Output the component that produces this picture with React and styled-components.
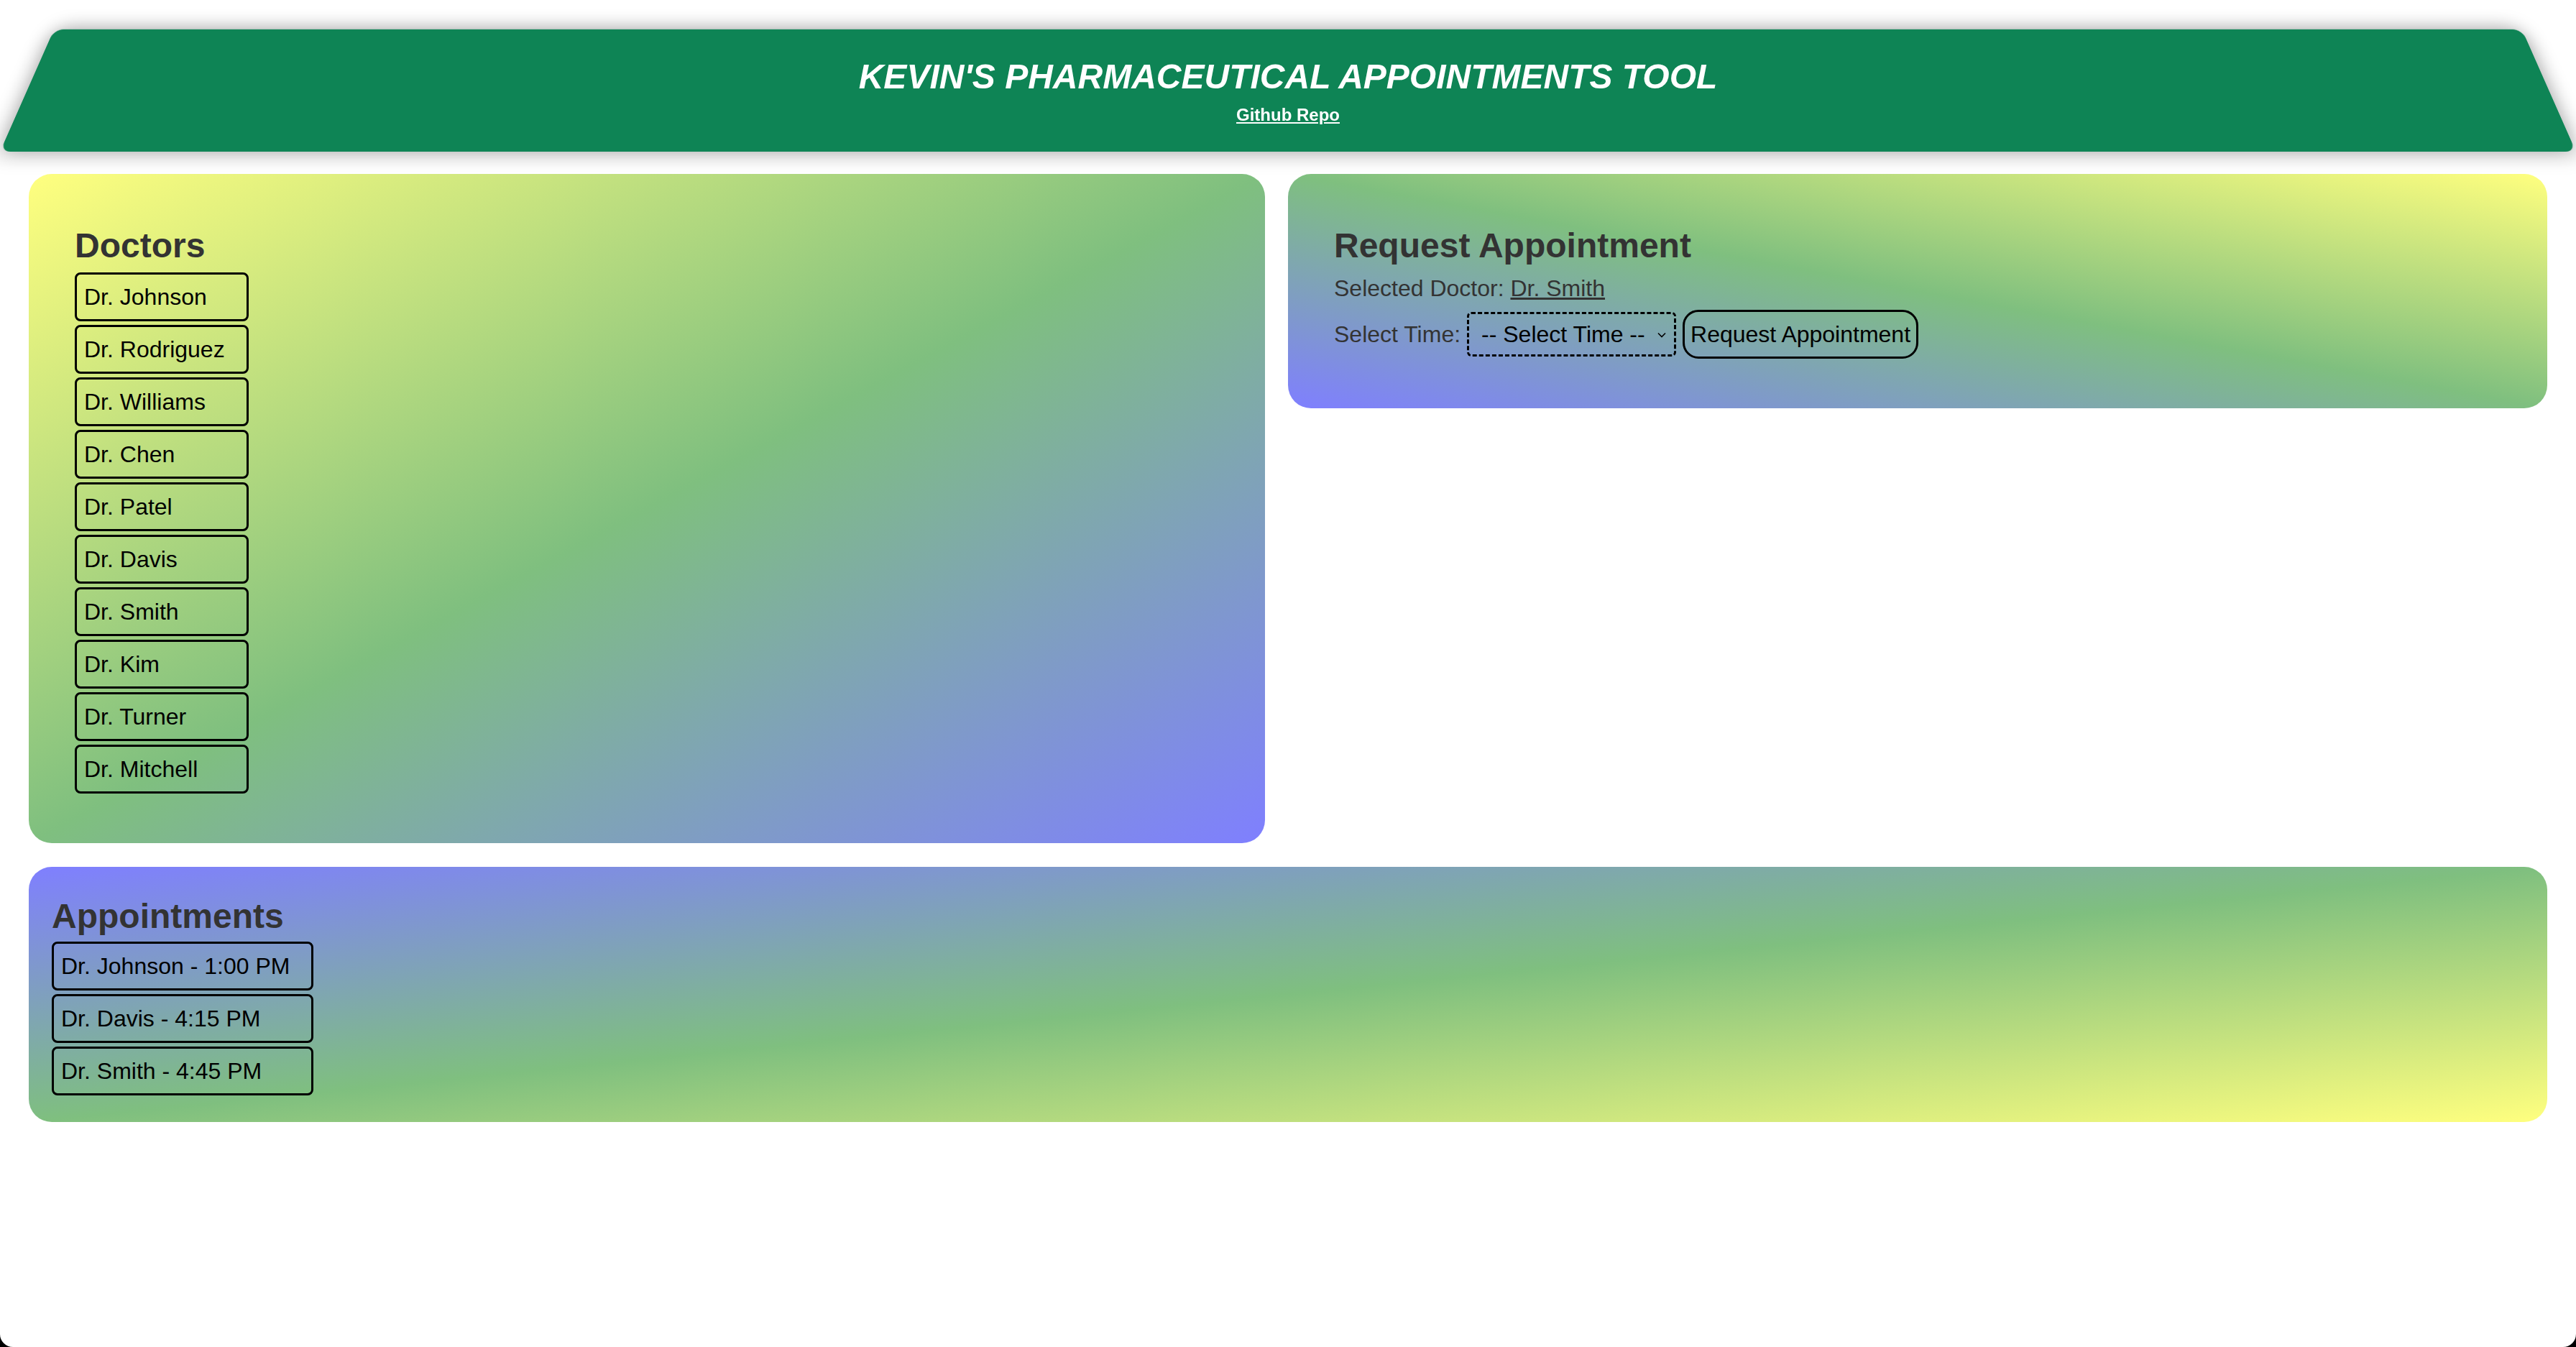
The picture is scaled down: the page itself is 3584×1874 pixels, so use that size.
import React from "react";
import styled, { createGlobalStyle } from "styled-components";

const GlobalStyle = createGlobalStyle`
  html {
    background: #000;
  }

  body {
    margin: 0;
    min-height: 100vh;
    background: #fff;
    border-radius: 0 0 18px 18px;
    font-family: "Liberation Sans", Arial, sans-serif;
    color: #333;
  }
`;

const doctors = [
  "Dr. Johnson",
  "Dr. Rodriguez",
  "Dr. Williams",
  "Dr. Chen",
  "Dr. Patel",
  "Dr. Davis",
  "Dr. Smith",
  "Dr. Kim",
  "Dr. Turner",
  "Dr. Mitchell",
];

const appointments = [
  "Dr. Johnson - 1:00 PM",
  "Dr. Davis - 4:15 PM",
  "Dr. Smith - 4:45 PM",
];

const yellow = "rgba(255, 255, 0, 0.5)";
const green = "rgba(0, 128, 0, 0.5)";
const blue = "rgba(0, 0, 255, 0.5)";

const Header = styled.header`
  position: relative;
  box-sizing: border-box;
  height: 183px;
  margin-top: 28px;
  padding-top: 51px;
  display: flex;
  flex-direction: column;
  align-items: center;

  &::before {
    content: "";
    position: absolute;
    inset: 0;
    background: #0e8455;
    border-radius: 14px;
    box-shadow: 0 0 30px rgba(0, 0, 0, 0.4);
    transform: perspective(1000px) rotateX(13.86deg);
    transform-origin: bottom;
  }
`;

const Title = styled.h1`
  position: relative;
  margin: 0 0 12px;
  font-size: 48px;
  line-height: 55px;
  font-style: italic;
  font-weight: bold;
  color: #fff;
`;

const RepoLink = styled.a`
  position: relative;
  font-size: 24px;
  line-height: 28px;
  font-weight: bold;
  color: #fff;
  text-decoration: underline;
`;

const Main = styled.main`
  display: flex;
  flex-direction: column;
  gap: 33px;
  padding: 31px 40px 0;
`;

const TopRow = styled.div`
  display: grid;
  grid-template-columns: 1720fr 1752fr;
  gap: 32px;
  align-items: start;
`;

const Panel = styled.section`
  border-radius: 32px;
  padding: ${(p) => p.$pad};
  background: linear-gradient(
    ${(p) => p.$dir},
    ${(p) => p.$stops}
  );
`;

const Heading = styled.h2`
  margin: ${(p) => p.$top || "4px"} 0 ${(p) => p.$gap || "10px"};
  font-size: 48px;
  line-height: 55px;
  font-weight: bold;
  color: #333;
`;

const List = styled.div`
  display: grid;
  justify-content: start;
  gap: 5px;
`;

const ItemButton = styled.button`
  box-sizing: border-box;
  padding: 11px 30px 11px 10px;
  border: 3px solid #000;
  border-radius: 8px;
  background: transparent;
  font-family: "Liberation Sans", Arial, sans-serif;
  font-size: 32px;
  line-height: 40px;
  color: #000;
  text-align: left;
  cursor: pointer;
`;

const Info = styled.p`
  margin: 14px 0 0;
  font-size: 32px;
  line-height: 37px;
  color: #333;

  span {
    text-decoration: underline;
  }
`;

const TimeRow = styled.div`
  display: flex;
  align-items: center;
  margin-top: 11px;
  font-size: 32px;
  color: #333;
`;

const Label = styled.label`
  margin-right: 9px;
`;

const SelectWrap = styled.div`
  position: relative;
  display: flex;
`;

const TimeSelect = styled.select`
  box-sizing: border-box;
  width: 291px;
  height: 62px;
  padding: 0 30px 0 17px;
  border: 3px dashed #000;
  border-radius: 6px;
  background: transparent;
  appearance: none;
  font-family: "Liberation Sans", Arial, sans-serif;
  font-size: 32px;
  color: #000;
`;

const Chevron = styled.svg`
  position: absolute;
  right: 14px;
  top: 50%;
  width: 12px;
  height: 8px;
  margin-top: -3px;
  pointer-events: none;
`;

const RequestButton = styled.button`
  box-sizing: border-box;
  margin-left: 9px;
  padding: 11px 8px;
  border: 3px solid #000;
  border-radius: 22px;
  background: transparent;
  font-family: "Liberation Sans", Arial, sans-serif;
  font-size: 32px;
  line-height: 40px;
  color: #000;
  cursor: pointer;
`;

export default function App() {
  return (
    <>
      <GlobalStyle />
      <Header>
        <Title>KEVIN'S PHARMACEUTICAL APPOINTMENTS TOOL</Title>
        <RepoLink href="#">Github Repo</RepoLink>
      </Header>
      <Main>
        <TopRow>
          <Panel
            $pad="64px 64px 69px"
            $dir="to bottom right"
            $stops={`${yellow}, ${green}, ${blue}`}
          >
            <Heading $top="8px">Doctors</Heading>
            <List>
              {doctors.map((d) => (
                <ItemButton key={d}>{d}</ItemButton>
              ))}
            </List>
          </Panel>
          <Panel
            $pad="70px 64px 69px"
            $dir="to bottom left"
            $stops={`${yellow}, ${green}, ${blue}`}
          >
            <Heading $top="2px" $gap="0">
              Request Appointment
            </Heading>
            <Info>
              Selected Doctor: <span>Dr. Smith</span>
            </Info>
            <TimeRow>
              <Label htmlFor="time">Select Time:</Label>
              <SelectWrap>
                <TimeSelect id="time" defaultValue="">
                  <option value="">-- Select Time --</option>
                </TimeSelect>
                <Chevron viewBox="0 0 12 8" fill="none">
                  <path d="M1 1.5 6 6.5 11 1.5" stroke="#000" strokeWidth="1.6" />
                </Chevron>
              </SelectWrap>
              <RequestButton>Request Appointment</RequestButton>
            </TimeRow>
          </Panel>
        </TopRow>
        <Panel
          $pad="33px 32px 37px"
          $dir="to bottom right"
          $stops={`${blue}, ${green}, ${yellow}`}
        >
          <Heading $top="8px" $gap="8px">
            Appointments
          </Heading>
          <List>
            {appointments.map((a) => (
              <ItemButton key={a}>{a}</ItemButton>
            ))}
          </List>
        </Panel>
      </Main>
    </>
  );
}
